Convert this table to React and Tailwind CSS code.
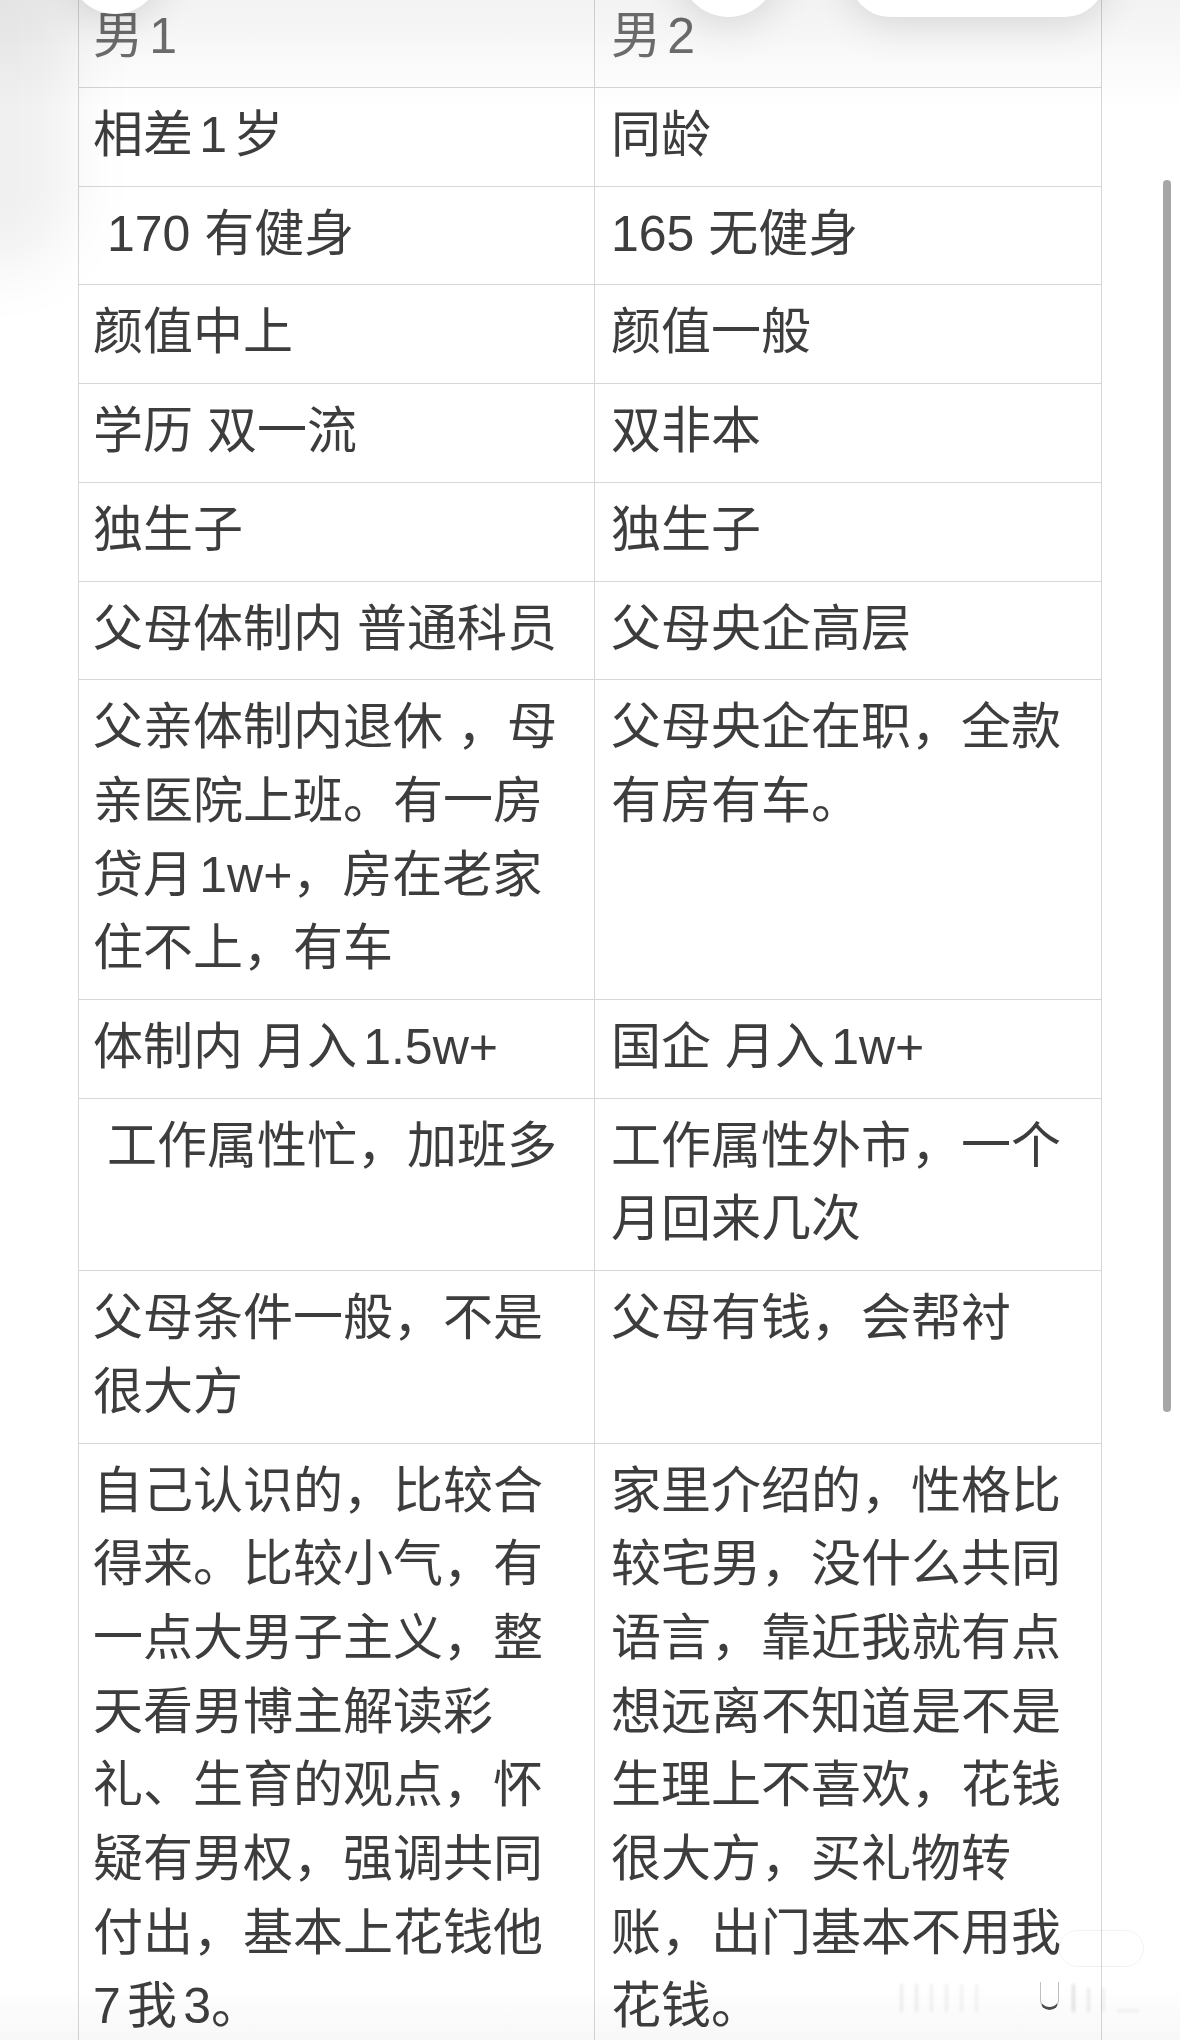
import React from "react";

const rows = [
  ["相差1岁", "同龄"],
  ["\u00a0170 有健身", "165 无健身"],
  ["颜值中上", "颜值一般"],
  ["学历 双一流", "双非本"],
  ["独生子", "独生子"],
  ["父母体制内 普通科员", "父母央企高层"],
  [
    "父亲体制内退休 ，母亲医院上班。有一房贷月1w+，房在老家住不上，有车",
    "父母央企在职，全款有房有车。",
  ],
  ["体制内 月入1.5w+", "国企 月入1w+"],
  ["\u00a0工作属性忙，加班多", "工作属性外市，一个月回来几次"],
  ["父母条件一般，不是很大方", "父母有钱，会帮衬"],
  [
    "自己认识的，比较合得来。比较小气，有一点大男子主义，整天看男博主解读彩礼、生育的观点，怀疑有男权，强调共同付出，基本上花钱他7我3。",
    "家里介绍的，性格比较宅男，没什么共同语言，靠近我就有点想远离不知道是不是生理上不喜欢，花钱很大方，买礼物转账，出门基本不用我花钱。",
  ],
];

const font = {
  fontFamily: '"Liberation Sans", "Noto Sans CJK SC", sans-serif',
};

const isCJK = (c) => !!c && /[\u4e00-\u9fff]/.test(c);
const isLat = (c) => !!c && /[A-Za-z0-9+]/.test(c);

// emulate CJK/Latin auto spacing (1/8 em) by margins on the ideographs
function Spaced({ text }) {
  const out = [];
  let buf = "";
  const chars = Array.from(text);
  chars.forEach((c, i) => {
    const prev = chars[i - 1];
    const next = chars[i + 1];
    if (isCJK(c) && (isLat(prev) || isLat(next))) {
      if (buf) {
        out.push(buf);
        buf = "";
      }
      const both = isLat(prev) && isLat(next);
      const cls = both
        ? "mx-[6.25px]"
        : isLat(prev)
        ? "ml-[6.25px]"
        : "mr-[6.25px]";
      out.push(
        <span key={i} className={cls}>
          {c}
        </span>
      );
    } else {
      buf += c;
    }
  });
  if (buf) out.push(buf);
  return <>{out}</>;
}

export default function App() {
  return (
    <div
      className="relative w-[1180px] h-[2040px] overflow-hidden bg-white text-[#3d3d3d]"
      style={font}
    >
      <div className="-mt-[10.7px] ml-[78px] w-[1024px] border-l border-r border-[#d6d6d6]">
        {/* header */}
        <div className="flex border-b border-[#d6d6d6]">
          <div className="w-[516px] shrink-0 border-r border-[#d6d6d6] pl-[14px] pr-[27px] pt-[11px] pb-[13px] text-[50px] leading-[73.7px] text-[#6e6e6e]">
            <Spaced text="男1" />
          </div>
          <div className="flex-1 pl-[16px] pr-[10px] pt-[11px] pb-[13px] text-[50px] leading-[73.7px] text-[#6e6e6e]">
            <Spaced text="男2" />
          </div>
        </div>
        {rows.map((r, i) => (
          <div key={i} className="flex border-b border-[#d6d6d6]">
            <div className="w-[516px] shrink-0 border-r border-[#d6d6d6] pl-[14px] pr-[27px] pt-[11px] pb-[13px] text-[50px] leading-[73.7px]">
              <Spaced text={r[0]} />
            </div>
            <div className="flex-1 min-w-0 pl-[16px] pr-[10px] pt-[11px] pb-[13px] text-[50px] leading-[73.7px]">
              <Spaced text={r[1]} />
            </div>
          </div>
        ))}
      </div>

      {/* top blurred overlay */}
      <div className="pointer-events-none absolute inset-x-0 top-0 h-[110px] bg-gradient-to-b from-black/[0.05] to-transparent" />
      <div className="pointer-events-none absolute left-[-70px] top-[-60px] h-[330px] w-[140px] rounded-full bg-black/[0.06] blur-[30px]" />
      <div className="pointer-events-none absolute left-[69px] top-[-78px] h-[92px] w-[92px] rounded-full bg-white shadow-[0_8px_40px_rgba(0,0,0,0.12)]" />
      <div className="pointer-events-none absolute left-[680px] top-[-80px] h-[97px] w-[97px] rounded-full bg-white shadow-[0_8px_40px_rgba(0,0,0,0.12)]" />
      <div className="pointer-events-none absolute left-[850px] top-[-63px] h-[80px] w-[255px] rounded-[40px] bg-white shadow-[0_8px_40px_rgba(0,0,0,0.12)]" />

      {/* scrollbar */}
      <div className="absolute left-[1163px] top-[180px] h-[1232px] w-[8px] rounded-full bg-[#a6a6a6]" />

      {/* watermark */}
      <div className="pointer-events-none absolute left-[1059px] top-[1930px] h-[37px] w-[85px] rounded-full border border-black/[0.05]" />

      {/* bottom blurred bar */}
      <div className="pointer-events-none absolute inset-x-0 bottom-0 h-[55px] bg-gradient-to-t from-black/[0.03] to-transparent" />
      <div className="pointer-events-none absolute left-[900px] top-[1984px] flex items-end gap-[12px] blur-[1.5px]">
        <div className="h-[28px] w-[3px] bg-black/[0.07]" />
        <div className="h-[28px] w-[3px] bg-black/[0.07]" />
        <div className="h-[28px] w-[3px] bg-black/[0.06]" />
        <div className="h-[28px] w-[3px] bg-black/[0.06]" />
        <div className="h-[28px] w-[3px] bg-black/[0.05]" />
        <div className="h-[28px] w-[3px] bg-black/[0.05]" />
      </div>
      <div className="pointer-events-none absolute left-[1040px] top-[1982px] h-[28px] w-[19px] rounded-b-full border-b-[3px] border-l border-r border-b-black/70 border-l-black/25 border-r-black/25 blur-[0.5px]" />
      <div className="pointer-events-none absolute left-[1072px] top-[1984px] flex items-end gap-[12px] blur-[1.5px]">
        <div className="h-[28px] w-[3px] bg-black/[0.12]" />
        <div className="h-[24px] w-[3px] bg-black/[0.08]" />
        <div className="h-[24px] w-[3px] bg-black/[0.06]" />
        <div className="h-[3px] w-[22px] bg-black/[0.05]" />
      </div>
    </div>
  );
}
